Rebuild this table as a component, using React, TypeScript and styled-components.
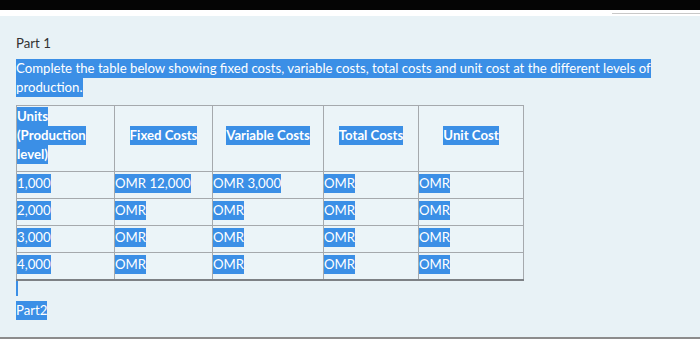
import React from "react";
import styled, { createGlobalStyle } from "styled-components";

const GlobalStyle = createGlobalStyle`
  html, body {
    margin: 0;
    padding: 0;
    height: 339px;
    overflow: hidden;
    background: #e8f2f6;
  }
  #root {
    height: 100%;
  }
`;

const Page = styled.div`
  display: flex;
  flex-direction: column;
  height: 339px;
  font-family: Lato, "Noto Sans", sans-serif;
  font-size: 13.2px;
  color: #333;
`;

const TopBar = styled.div`
  height: 10px;
  background: #050505;
`;

const WhiteStrip = styled.div`
  height: 6px;
  background: #ffffff;
  display: flex;
  justify-content: flex-end;
  align-items: flex-start;
  padding-top: 3px;
  box-sizing: border-box;
`;

const StripRule = styled.div`
  width: 88px;
  height: 1px;
  background: #c8c8c8;
`;

const Main = styled.main`
  flex: 1;
  padding: 18px 16px 0;
  border-bottom: 2px solid #8c8c8c;
  background: #e8f2f6;
`;

const Para = styled.p<{ $gap?: number }>`
  margin: 0 0 ${(p) => p.$gap ?? 0}px;
  line-height: 19px;
`;

const Sel = styled.span`
  background: #3b8fe6;
  color: #ffffff;
  padding: 1px 0 2px;
  -webkit-box-decoration-break: clone;
  box-decoration-break: clone;
`;

const Table = styled.table`
  border-collapse: collapse;
  table-layout: fixed;
  width: 508px;
  border-top: 1px solid #b5b9bc;
  border-bottom: 2px solid #7d8185;
  background: #ebf4f8;
`;

const HeadCell = styled.th<{ $align?: string }>`
  border: 1px solid #a5a9ad;
  font-weight: 700;
  text-align: ${(p) => p.$align ?? "center"};
  vertical-align: middle;
  padding: 0 0 6px;
  line-height: 19px;
  height: 59px;
`;

const Cell = styled.td`
  border: 1px solid #a5a9ad;
  padding: 0 0 3px;
  height: 23px;
  line-height: 19px;
  vertical-align: middle;
  text-align: left;
`;

const Caret = styled.div`
  width: 2px;
  height: 15px;
  background: #3b8fe6;
  margin-bottom: 5px;
`;

const columns = [
  { label: "Units (Production level)", width: 98, align: "left" },
  { label: "Fixed Costs", width: 98 },
  { label: "Variable Costs", width: 111 },
  { label: "Total Costs", width: 95 },
  { label: "Unit Cost", width: 105 },
];

const rows = [
  ["1,000", "OMR 12,000", "OMR 3,000", "OMR", "OMR"],
  ["2,000", "OMR", "OMR", "OMR", "OMR"],
  ["3,000", "OMR", "OMR", "OMR", "OMR"],
  ["4,000", "OMR", "OMR", "OMR", "OMR"],
];

const App: React.FC = () => {
  return (
    <>
      <GlobalStyle />
      <Page>
        <TopBar />
        <WhiteStrip>
          <StripRule />
        </WhiteStrip>
        <Main>
          <Para $gap={6}>Part 1</Para>
          <Para $gap={8}>
            <Sel>
              Complete the table below showing fixed costs, variable costs, total costs and unit cost at the
              different levels of production.
            </Sel>
          </Para>
          <Table>
            <colgroup>
              {columns.map((c) => (
                <col key={c.label} style={{ width: c.width }} />
              ))}
            </colgroup>
            <thead>
              <tr>
                {columns.map((c) => (
                  <HeadCell key={c.label} $align={c.align}>
                    <Sel>{c.label}</Sel>
                  </HeadCell>
                ))}
              </tr>
            </thead>
            <tbody>
              {rows.map((r) => (
                <tr key={r[0]}>
                  {r.map((v, i) => (
                    <Cell key={i}>
                      <Sel>{v}</Sel>
                    </Cell>
                  ))}
                </tr>
              ))}
            </tbody>
          </Table>
          <Caret />
          <Para>
            <Sel>Part2</Sel>
          </Para>
        </Main>
      </Page>
    </>
  );
};

export default App;
